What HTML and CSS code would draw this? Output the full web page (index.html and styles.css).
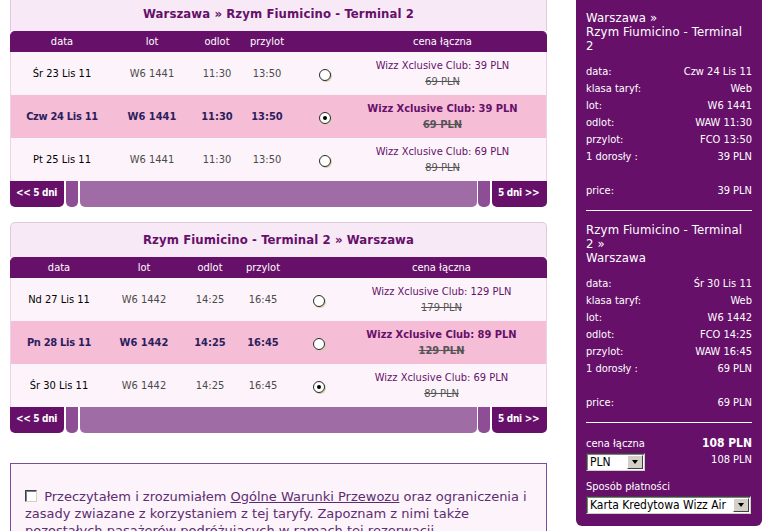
FILE: index.html
```html
<!DOCTYPE html>
<html lang="pl">

<head>
    <meta charset="UTF-8">
    <title>Wybór lotu</title>
    <link rel="stylesheet" href="styles.css">
</head>

<body>
    <div id="page">
        <div id="main">

            <!-- ==== wylot ==== -->
            <div class="flight out">
                <div class="flight_title">Warszawa » Rzym Fiumicino - Terminal 2</div>
                <div class="row head">
                    <span>data</span><span>lot</span><span>odlot</span><span>przylot</span><span></span><span class="cena">cena łączna</span>
                </div>
                <div class="row">
                    <span class="date">Śr 23 Lis 11</span><span class="num">W6 1441</span><span class="num">11:30</span><span class="num">13:50</span>
                    <span class="radio"></span>
                    <span class="cena price">Wizz Xclusive Club: 39 PLN<s>69 PLN</s></span>
                </div>
                <div class="row sel">
                    <span class="date">Czw 24 Lis 11</span><span class="num">W6 1441</span><span class="num">11:30</span><span class="num">13:50</span>
                    <span class="radio on"></span>
                    <span class="cena price">Wizz Xclusive Club: 39 PLN<s>69 PLN</s></span>
                </div>
                <div class="row">
                    <span class="date">Pt 25 Lis 11</span><span class="num">W6 1441</span><span class="num">11:30</span><span class="num">13:50</span>
                    <span class="radio"></span>
                    <span class="cena price">Wizz Xclusive Club: 69 PLN<s>89 PLN</s></span>
                </div>
                <div class="nav">
                    <a class="prev">&lt;&lt; 5 dni</a><span class="tab"></span><span class="fill"></span><span class="tab"></span><a class="next">5 dni &gt;&gt;</a>
                </div>
            </div>

            <!-- ==== powrot ==== -->
            <div class="flight ret">
                <div class="flight_title">Rzym Fiumicino - Terminal 2 » Warszawa</div>
                <div class="row head">
                    <span>data</span><span>lot</span><span>odlot</span><span>przylot</span><span></span><span class="cena">cena łączna</span>
                </div>
                <div class="row">
                    <span class="date">Nd 27 Lis 11</span><span class="num">W6 1442</span><span class="num">14:25</span><span class="num">16:45</span>
                    <span class="radio"></span>
                    <span class="cena price">Wizz Xclusive Club: 129 PLN<s>179 PLN</s></span>
                </div>
                <div class="row sel">
                    <span class="date">Pn 28 Lis 11</span><span class="num">W6 1442</span><span class="num">14:25</span><span class="num">16:45</span>
                    <span class="radio"></span>
                    <span class="cena price">Wizz Xclusive Club: 89 PLN<s>129 PLN</s></span>
                </div>
                <div class="row">
                    <span class="date">Śr 30 Lis 11</span><span class="num">W6 1442</span><span class="num">14:25</span><span class="num">16:45</span>
                    <span class="radio on"></span>
                    <span class="cena price">Wizz Xclusive Club: 69 PLN<s>89 PLN</s></span>
                </div>
                <div class="nav">
                    <a class="prev">&lt;&lt; 5 dni</a><span class="tab"></span><span class="fill"></span><span class="tab"></span><a class="next">5 dni &gt;&gt;</a>
                </div>
            </div>

            <div id="terms">
                <span class="check"></span>
                Przeczytałem i zrozumiałem <a href="#">Ogólne Warunki Przewozu</a> oraz ograniczenia i zasady zwiazane z korzystaniem z tej taryfy. Zapoznam z nimi także pozostałych pasażerów podróżujących w ramach tej rezerwacji.
            </div>
        </div>

        <!-- ==== podsumowanie ==== -->
        <div id="summary">
            <div class="leg_title">Warszawa »<br>Rzym Fiumicino - Terminal 2</div>
            <div class="info">
                <div class="line"><span>data:</span><span>Czw 24 Lis 11</span></div>
                <div class="line"><span>klasa taryf:</span><span>Web</span></div>
                <div class="line"><span>lot:</span><span>W6 1441</span></div>
                <div class="line"><span>odlot:</span><span>WAW 11:30</span></div>
                <div class="line"><span>przylot:</span><span>FCO 13:50</span></div>
                <div class="line"><span>1 dorosły :</span><span>39 PLN</span></div>
                <div class="line price_line"><span>price:</span><span>39 PLN</span></div>
            </div>
            <hr>
            <div class="leg_title">Rzym Fiumicino - Terminal 2 »<br>Warszawa</div>
            <div class="info">
                <div class="line"><span>data:</span><span>Śr 30 Lis 11</span></div>
                <div class="line"><span>klasa taryf:</span><span>Web</span></div>
                <div class="line"><span>lot:</span><span>W6 1442</span></div>
                <div class="line"><span>odlot:</span><span>FCO 14:25</span></div>
                <div class="line"><span>przylot:</span><span>WAW 16:45</span></div>
                <div class="line"><span>1 dorosły :</span><span>69 PLN</span></div>
                <div class="line price_line"><span>price:</span><span>69 PLN</span></div>
            </div>
            <hr>
            <div class="line total"><span>cena łączna</span><b>108 PLN</b></div>
            <div class="currency">
                <div class="select small"><span>PLN</span><i class="btn"></i></div>
                <span>108 PLN</span>
            </div>
            <div class="line pay">Sposób płatności</div>
            <div class="select"><span>Karta Kredytowa Wizz Air</span><i class="btn"></i></div>
        </div>
    </div>
</body>

</html>
```

FILE: styles.css
```css
* {
    box-sizing: border-box;
}

body {
    margin: 0;
    background: #fff;
    font-family: "DejaVu Sans Condensed", "DejaVu Sans", sans-serif;
    font-stretch: condensed;
    font-size: 11px;
}

#page {
    display: flex;
    align-items: flex-start;
}

#main {
    width: 537px;
    margin-left: 10px;
    margin-top: -4px;
}

/* ==== flight tables ==== */

.flight {
    margin-bottom: 15px;
}

.flight_title {
    height: 35px;
    line-height: 34px;
    border: 1px solid #e2c8de;
    border-bottom: none;
    border-radius: 5px 5px 0 0;
    background: #f7e9f5;
    text-align: center;
    font-weight: bold;
    font-size: 13px;
    letter-spacing: 0.1px;
    color: #66106a;
}

.row {
    display: grid;
    align-items: center;
    justify-items: center;
    height: 43px;
    text-align: center;
    background: #fdf4fb;
    border-left: 1px solid #ecd2e6;
    border-right: 1px solid #ecd2e6;
}

.out .row {
    grid-template-columns: 102px 78px 52px 48px 68px 1fr;
}

.out .cena {
    padding-right: 20px;
}

.ret .row {
    grid-template-columns: 96px 74px 58px 48px 64px 1fr;
}

.ret .cena {
    padding-right: 14px;
}

.row .cena {
    justify-self: stretch;
}

.row.head {
    height: 21px;
    background: #66106a;
    border-color: #66106a;
    border-radius: 5px 5px 0 0;
    color: #fff;
}

.row.sel {
    background: #f6bdd7;
    font-weight: bold;
}

.sel .date {
    letter-spacing: -0.3px;
}

.date {
    color: #000;
}

.num {
    color: #4a4a4a;
}

.sel .date,
.sel .num {
    color: #2c1e5c;
}

.price {
    color: #66106a;
    line-height: 16px;
}

.price s {
    display: block;
    color: #555;
}

.radio {
    width: 12px;
    height: 12px;
    border-radius: 50%;
    border: 1px solid #2a2a2a;
    background: #fff;
    box-shadow: 1px 1px 0 #d6cfae;
    margin-top: 3px;
    display: flex;
    align-items: center;
    justify-content: center;
}

.radio.on::after {
    content: "";
    width: 4px;
    height: 4px;
    border-radius: 50%;
    background: #000;
}

.nav {
    display: flex;
    height: 26px;
}

.nav a,
.nav span {
    border-radius: 0 0 5px 5px;
}

.prev,
.next {
    background: #66106a;
    color: #fff;
    font-weight: bold;
    font-size: 10px;
    letter-spacing: -0.3px;
    white-space: nowrap;
    line-height: 24px;
    padding-left: 6px;
}

.prev {
    width: 54px;
}

.next {
    width: 55px;
    margin-left: 2px;
}

.tab {
    width: 12px;
    background: #8e4e95;
    margin-left: 2px;
}

.fill {
    width: 397px;
    background: #a06ca6;
    margin-left: 2px;
}

.fill + .tab {
    margin-left: 1px;
}

/* ==== terms ==== */

#terms {
    margin-top: 30px;
    border: 1px solid #7b4c9b;
    background: #fdf3fb;
    padding: 24px 12px 20px 14px;
    color: #5c2d70;
    font-family: "DejaVu Sans", sans-serif;
    font-stretch: normal;
    font-size: 13px;
    line-height: 17px;
    height: 90px;
}

#terms a {
    color: #5c2d70;
}

.check {
    display: inline-block;
    width: 12px;
    height: 12px;
    border: 1px solid;
    border-color: #404040 #d4d0c8 #d4d0c8 #404040;
    background: #fff;
    box-shadow: inset 1px 1px 0 #808080;
    margin-right: 3px;
    vertical-align: -1px;
}

/* ==== summary ==== */

#summary {
    width: 186px;
    height: 526px;
    margin-left: 29px;
    padding: 11px 10px 0;
    background: #66106a;
    color: #fff;
    border-radius: 0 0 6px 6px;
}

.leg_title {
    font-size: 13px;
    line-height: 14px;
    letter-spacing: 0.15px;
}

.info {
    margin-top: 10px;
}

.line {
    display: flex;
    justify-content: space-between;
    line-height: 17px;
}

.price_line {
    margin-top: 17px;
}

#summary hr {
    border: none;
    border-top: 1px solid #fff;
    margin: 11px 0 12px;
}

.total b {
    font-size: 12px;
}

.currency {
    display: flex;
    justify-content: space-between;
    align-items: flex-start;
    margin-top: 1px;
}

.currency > span {
    line-height: 14px;
}

.pay {
    margin-top: 7px;
}

.select {
    display: flex;
    height: 18px;
    width: 165px;
    background: #fff;
    color: #000;
    border: 1px solid;
    border-color: #404040 #d4d0c8 #d4d0c8 #404040;
    box-shadow: inset 1px 1px 0 #808080;
    margin-top: 1px;
}

.select.small {
    width: 59px;
    margin-top: 0;
}

.select span {
    flex: 1;
    line-height: 16px;
    padding-left: 3px;
    font-size: 12px;
}

.select .btn {
    width: 16px;
    margin: 1px;
    background: #d4d0c8;
    border: 1px solid;
    border-color: #fff #404040 #404040 #fff;
    display: flex;
    align-items: center;
    justify-content: center;
}

.select .btn::after {
    content: "";
    border-left: 3px solid transparent;
    border-right: 3px solid transparent;
    border-top: 4px solid #000;
}
```
